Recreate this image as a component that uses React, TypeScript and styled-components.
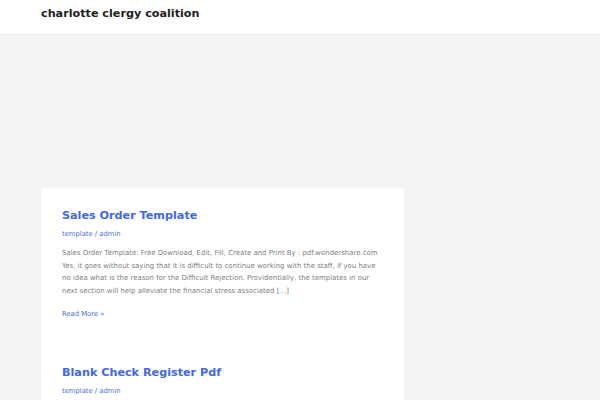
import React from "react";
import styled, { createGlobalStyle } from "styled-components";

const Global = createGlobalStyle`
  html, body { margin: 0; padding: 0; background: #f4f4f4; overflow: hidden; }
  body { font-family: "DejaVu Sans", sans-serif; }
`;

const Header = styled.header`
  height: 34px;
  background: #fff;
  border-bottom: 1px solid #ebebeb;
  display: flex;
  align-items: center;
  padding-left: 41px;
`;

const SiteTitle = styled.div`
  font-size: 11.2px;
  font-weight: bold;
  color: #1e1e1e;
  margin-top: -7px;
`;

const Main = styled.main`
  padding: 153px 0 0 41px;
`;

const Column = styled.div`
  width: 363px;
  background: #fff;
`;

const Article = styled.article`
  padding: 21px 21px 26px;
`;

const Title = styled.h2`
  margin: 0;
  font-size: 11.2px;
  font-weight: bold;
  color: #4169e1;
  line-height: 14px;
`;

const Meta = styled.div`
  font-size: 6.8px;
  line-height: 10px;
  color: #4a6fd8;
  margin-top: 6px;
`;

const Excerpt = styled.p`
  margin: 8px 0 0;
  font-size: 6.95px;
  line-height: 12.7px;
  color: #808080;
`;

const ReadMore = styled.a`
  display: block;
  margin-top: 11px;
  font-size: 6.8px;
  line-height: 10px;
  color: #4a6fd8;
`;

export default function App() {
  return (
    <>
      <Global />
      <Header>
        <SiteTitle>charlotte clergy coalition</SiteTitle>
      </Header>
      <Main>
        <Column>
          <Article>
            <Title>Sales Order Template</Title>
            <Meta>template / admin</Meta>
            <Excerpt>
              Sales Order Template: Free Download, Edit, Fill, Create and Print By : pdf.wondershare.com
              Yes, it goes without saying that it is difficult to continue working with the staff, if you have
              no idea what is the reason for the Difficult Rejection. Providentially, the templates in our
              next section will help alleviate the financial stress associated […]
            </Excerpt>
            <ReadMore>Read More »</ReadMore>
          </Article>
          <Article>
            <Title>Blank Check Register Pdf</Title>
            <Meta>template / admin</Meta>
          </Article>
        </Column>
      </Main>
    </>
  );
}
